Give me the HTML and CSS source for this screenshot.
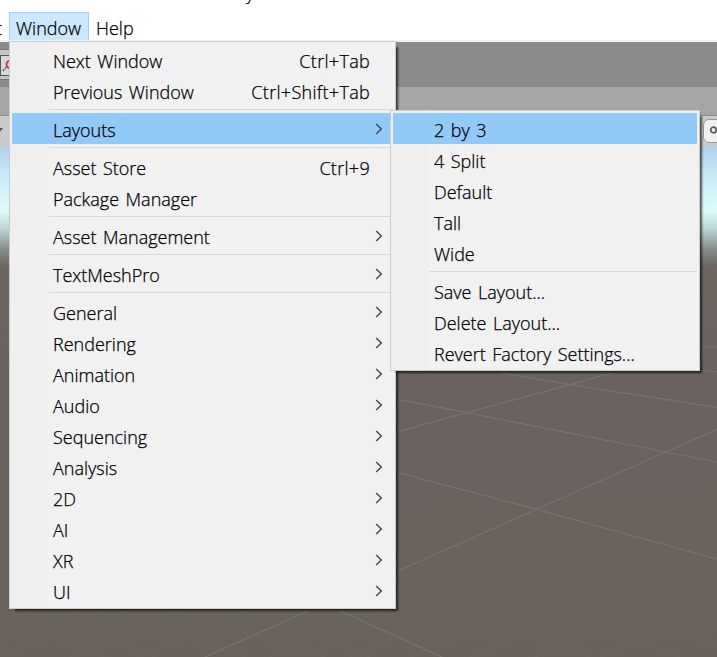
FILE: index.html
```html
<!DOCTYPE html>
<html lang="en">
<head>
<meta charset="utf-8">
<title>Window menu</title>
<link rel="stylesheet" href="styles.css">
</head>
<body>
<div class="app">
  <header class="menubar">
    <span class="clip-left">t</span>
    <span class="clip-top">y</span>
    <span class="tab open">Window</span>
    <span class="tab help">Help</span>
  </header>
  <div class="toolbar"><span class="tool"><svg width="14" height="21" viewBox="0 0 14 21"><path d="M10 5A4.3 4.3 0 0 0 10 13.5" fill="none" stroke="#c8283a" stroke-width="1.8"/><path d="M2 17L6 12.5" stroke="#666" stroke-width="1.8" stroke-dasharray="3 1"/></svg></span></div>
  <div class="band"></div>
  <div class="viewbar"><span class="caret"></span><span class="search"><svg width="14" height="14" viewBox="0 0 14 14"><circle cx="6.5" cy="6" r="2.8" fill="none" stroke="#5c5c5c" stroke-width="1.8"/></svg></span></div>
  <main class="scene">
    <svg class="grid" width="717" height="510" viewBox="0 147 717 510">
      <g class="faint">
        <path d="M0 615L105 657M25 610L155 657M100 610L245 657M170 610L325 657M240 610L370 657M398 586L590 657M398 558L680 657M398 535L717 646M398 515L717 620M398 500L717 597M0 640L80 610M0 655L130 610M70 657L190 610M140 657L250 610M270 657L717 470M350 657L717 500M410 657L717 530M470 657L717 555M535 657L717 583M600 657L717 607"/>
        <path d="M0 287Q5 285 9 287M0 301Q5 302 9 300M0 323H9M0 341L9 339M0 362L9 366M0 397L9 395M701 290L717 293M701 307H717M701 322L717 320"/>
      </g>
      <path class="major" d="M398 399.3L466.7 412.7L665.7 452L717 462M398 472.7L536.7 509.3L717 559M500 372.7L570 384.7L717 407.3M398 431.7L466.7 412.7L570 384.7L613 372.7M398 570.7L536.7 509.3L665.7 452L717 429.3M338 610L442 657M205 657L310 610M700 347H717M700 370L717 372"/>
    </svg>
  </main>

  <nav class="menu main">
    <div class="row"><span>Next Window</span><kbd>Ctrl+Tab</kbd></div>
    <div class="row"><span>Previous Window</span><kbd>Ctrl+Shift+Tab</kbd></div>
    <hr>
    <div class="row sub active"><span>Layouts</span><svg class="chev" viewBox="0 0 8 12"><path d="M1.2 1L6.3 6L1.2 11"/></svg></div>
    <hr>
    <div class="row"><span>Asset Store</span><kbd>Ctrl+9</kbd></div>
    <div class="row"><span>Package Manager</span></div>
    <hr>
    <div class="row sub"><span>Asset Management</span><svg class="chev" viewBox="0 0 8 12"><path d="M1.2 1L6.3 6L1.2 11"/></svg></div>
    <hr>
    <div class="row sub"><span>TextMeshPro</span><svg class="chev" viewBox="0 0 8 12"><path d="M1.2 1L6.3 6L1.2 11"/></svg></div>
    <hr>
    <div class="row sub"><span>General</span><svg class="chev" viewBox="0 0 8 12"><path d="M1.2 1L6.3 6L1.2 11"/></svg></div>
    <div class="row sub"><span>Rendering</span><svg class="chev" viewBox="0 0 8 12"><path d="M1.2 1L6.3 6L1.2 11"/></svg></div>
    <div class="row sub"><span>Animation</span><svg class="chev" viewBox="0 0 8 12"><path d="M1.2 1L6.3 6L1.2 11"/></svg></div>
    <div class="row sub"><span>Audio</span><svg class="chev" viewBox="0 0 8 12"><path d="M1.2 1L6.3 6L1.2 11"/></svg></div>
    <div class="row sub"><span>Sequencing</span><svg class="chev" viewBox="0 0 8 12"><path d="M1.2 1L6.3 6L1.2 11"/></svg></div>
    <div class="row sub"><span>Analysis</span><svg class="chev" viewBox="0 0 8 12"><path d="M1.2 1L6.3 6L1.2 11"/></svg></div>
    <div class="row sub"><span>2D</span><svg class="chev" viewBox="0 0 8 12"><path d="M1.2 1L6.3 6L1.2 11"/></svg></div>
    <div class="row sub"><span>AI</span><svg class="chev" viewBox="0 0 8 12"><path d="M1.2 1L6.3 6L1.2 11"/></svg></div>
    <div class="row sub"><span>XR</span><svg class="chev" viewBox="0 0 8 12"><path d="M1.2 1L6.3 6L1.2 11"/></svg></div>
    <div class="row sub"><span>UI</span><svg class="chev" viewBox="0 0 8 12"><path d="M1.2 1L6.3 6L1.2 11"/></svg></div>
  </nav>

  <nav class="menu layouts">
    <div class="row active"><span>2 by 3</span></div>
    <div class="row"><span>4 Split</span></div>
    <div class="row"><span>Default</span></div>
    <div class="row"><span>Tall</span></div>
    <div class="row"><span>Wide</span></div>
    <hr>
    <div class="row"><span>Save Layout...</span></div>
    <div class="row"><span>Delete Layout...</span></div>
    <div class="row"><span>Revert Factory Settings...</span></div>
  </nav>
</div>
</body>
</html>
```
FILE: styles.css
```css
* { box-sizing: border-box; }
body { margin: 0; overflow: hidden; }
.app {
  position: relative;
  width: 717px;
  height: 657px;
  overflow: hidden;
  display: flex;
  flex-direction: column;
  font: 300 18px/31px "Open Sans", "Noto Sans", sans-serif;
  word-spacing: 1.8px;
  -webkit-text-stroke: 0.25px #000;
  color: #000;
}
.menubar {
  position: relative;
  height: 42px;
  flex: none;
  display: flex;
  padding: 12px 0 0 9px;
  background: #fff;
  border-bottom: 2px solid #f0f0f0;
  overflow: hidden;
}
.clip-left { position: absolute; left: -4px; top: 13px; }
.clip-top { position: absolute; left: 246px; top: -22px; }
.tab { height: 29px; line-height: 32px; padding-left: 7px; }
.tab.open {
  width: 80px;
  padding-left: 6px;
  line-height: 31px;
  background: #cce8ff;
  border: 1px solid #99d1ff;
}
.toolbar { height: 45px; flex: none; background: #8a8a8a; padding-top: 7px; }
.tool {
  display: block;
  width: 20px;
  height: 31px;
  padding-top: 5px;
  background: #c4c4c4;
  border: solid #767676;
  border-width: 1px 0;
}
.tool svg { display: block; border: 1px solid #555; background: #d8d8d8; }
.band { height: 29px; flex: none; background: #a5a5a5; border-bottom: 1px solid #8e8e8e; }
.viewbar {
  height: 31px;
  flex: none;
  display: flex;
  justify-content: space-between;
  background: #cacaca;
}
.caret { margin: 12px 0 0 -5px; height: 5px; border: solid transparent; border-width: 5px 4px 0; border-top-color: #555; }
.search {
  width: 24px;
  height: 24px;
  margin: 3px -10px 0 0;
  padding: 4px 0 0 3px;
  background: #f0f0f0;
  border: 1px solid #999;
  border-radius: 6px;
}
.search svg { display: block; }
.scene {
  flex: 1;
  background: linear-gradient(#b1d2ef 0, #caebf6 30px, #dcfbfb 64px, #bcd5d5 82px, #8b9393 100px, #6c6560 119px, #6b625f 240px, #69625c 100%);
}
.grid { display: block; fill: none; }
.faint { stroke: #716d69; stroke-width: 1; opacity: .4; }
.major { stroke: #77746f; stroke-width: 1.2; }

.menu {
  position: absolute;
  padding: 2px;
  background: linear-gradient(90deg, #efefef 38px, #f1f1f1 38px);
  border: 1px solid #ccc;
  box-shadow: 4px 4px 2px -2px rgba(0, 0, 0, .65);
}
.main { left: 9px; top: 41px; width: 387px; }
.layouts { left: 390px; top: 110px; width: 310px; }
.row {
  height: 31px;
  display: flex;
  justify-content: space-between;
  padding: 2px 23px 0 41px;
  white-space: pre;
}
.row kbd { font: inherit; letter-spacing: .3px; }
.row.sub { padding-right: 10px; }
.active { background: #91c9f7; }
.chev { width: 8px; height: 12px; margin-top: 8px; fill: none; stroke: #444; stroke-width: 1.4; }
.menu hr { height: 1px; margin: 3px 0 3px 37px; border: 0; background: #d7d7d7; }
```
